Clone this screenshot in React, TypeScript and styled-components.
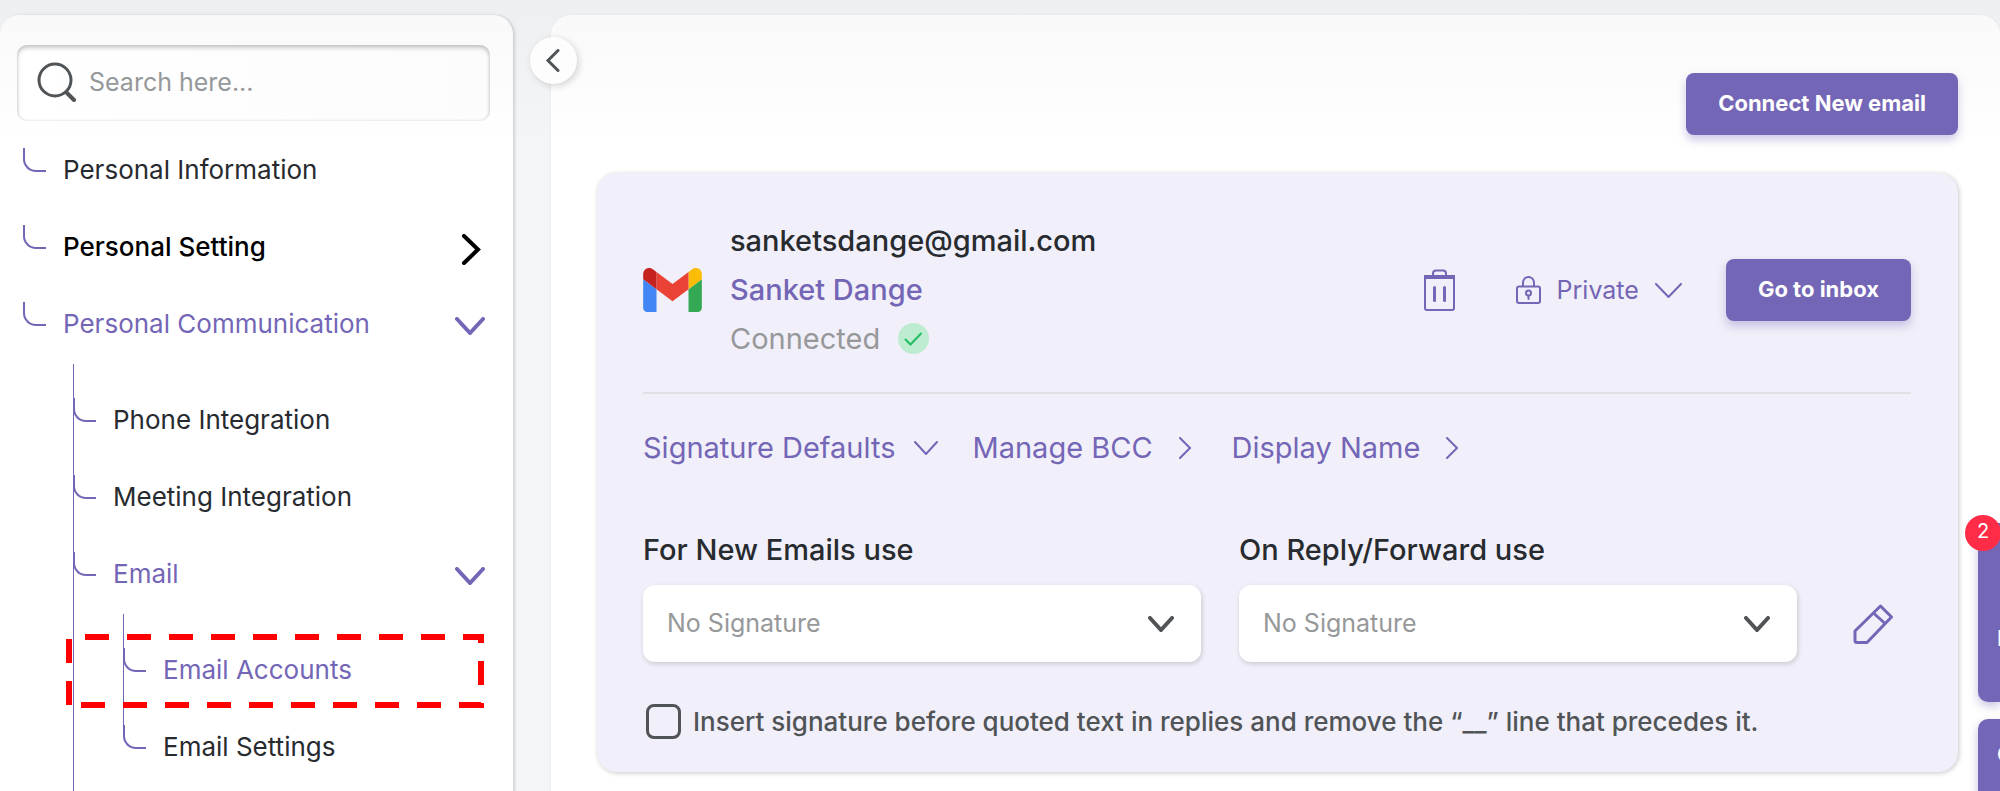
import React from "react";
import styled, { createGlobalStyle, css } from "styled-components";

const purple = "#7466b6";
const ink = "#272b2f";
const grey = "#979899";
const slate = "#505457";

const GlobalStyle = createGlobalStyle`
  *, *::before, *::after { box-sizing: border-box; }
  body {
    margin: 0;
    font-family: Inter, "Liberation Sans", sans-serif;
    font-size: 26px;
    color: ${ink};
    background: #f4f5f7;
  }
  button, input, select { font: inherit; color: inherit; margin: 0; }
  button { cursor: pointer; }
  svg { display: block; flex: none; }
`;

const Page = styled.div`
  position: relative;
  display: grid;
  grid-template-columns: 513px minmax(0, 1fr);
  column-gap: 38px;
  height: 100vh;
  padding-top: 15px;
  overflow: hidden;
  background: linear-gradient(#eeeff1, #f4f5f7 140px);
`;

const panel = css`
  border-radius: 20px 20px 0 0;
  background: linear-gradient(#f9f9f9, #ffffff 130px);
`;

const Sidebar = styled.aside`
  ${panel}
  padding: 30px 23px 0 17px;
  box-shadow: 2px 0 3px rgba(0, 0, 0, 0.14);
`;

const SearchBox = styled.label`
  display: flex;
  align-items: center;
  gap: 12px;
  height: 76px;
  padding: 0 20px 2px;
  margin-bottom: 10px;
  border-radius: 10px;
  background: linear-gradient(90deg, #ffffff, #fcfcfc);
  box-shadow: inset 0 3px 4px rgba(80, 80, 70, 0.28), inset 0 0 3px rgba(80, 80, 70, 0.2);
`;

const SearchInput = styled.input`
  flex: 1;
  min-width: 0;
  border: 0;
  padding: 0;
  outline: 0;
  background: transparent;
  font-size: 25px;
  &::placeholder { color: ${grey}; opacity: 1; }
`;

const Tree = styled.ul`
  list-style: none;
  margin: 0;
  padding: 0 0 0 6px;
`;

const Branch = styled.ul`
  list-style: none;
  margin: 2px 0 0 50px;
  padding: 17px 0 0;
  background: linear-gradient(${purple}, ${purple}) no-repeat 0 0 / 1px calc(100% - 50px);
`;

const OuterBranch = styled(Branch)`
  padding-bottom: 60px;
`;

const Node = styled.li`
  position: relative;
`;

const NodeLink = styled.a<{ $tone?: "active" | "strong" }>`
  display: flex;
  align-items: center;
  height: 77px;
  padding-right: 2px;
  text-decoration: none;
  color: ${(p) => (p.$tone === "active" ? purple : p.$tone === "strong" ? "#000000" : ink)};
  font-weight: ${(p) => (p.$tone === "strong" ? 500 : 400)};
  > svg { margin-top: 5px; }
`;

const Elbow = styled.span`
  align-self: flex-start;
  flex: none;
  width: 23px;
  height: 24px;
  margin: 17px 17px 0 0;
  border: solid ${purple};
  border-width: 0 0 2px 2px;
  border-bottom-left-radius: 13px;
`;

const NodeText = styled.span`
  flex: 1;
  white-space: nowrap;
`;

const Highlight = styled.svg`
  position: absolute;
  left: -58px;
  top: 3px;
  pointer-events: none;
`;

const Main = styled.main`
  ${panel}
  position: relative;
  padding: 58px 42px 0 46px;
  box-shadow: 0 0 3px rgba(0, 0, 0, 0.06);
`;

const Collapse = styled.button`
  position: absolute;
  left: -21px;
  top: 22px;
  display: grid;
  place-items: center;
  width: 47px;
  height: 47px;
  padding: 0 2px 0 0;
  border: 0;
  border-radius: 50%;
  background: #fdfdfd;
  color: ${slate};
  box-shadow: 2px 2px 7px rgba(0, 0, 0, 0.16);
`;

const Toolbar = styled.div`
  display: flex;
  justify-content: flex-end;
  margin-bottom: 38px;
`;

const PrimaryButton = styled.button`
  height: 62px;
  padding: 0 32px 2px;
  border: 0;
  border-radius: 8px;
  background: ${purple};
  color: #ffffff;
  font-size: 22px;
  font-weight: 700;
  white-space: nowrap;
  box-shadow: 0 5px 10px rgba(116, 102, 182, 0.35);
`;

const Card = styled.section`
  padding: 43px 47px 33px 46px;
  border-radius: 20px;
  background: #f1eff9;
  box-shadow: 1px 1px 5px rgba(0, 0, 0, 0.22);
`;

const Account = styled.header`
  display: flex;
  align-items: center;
  padding-bottom: 28px;
  border-bottom: 2px solid #e1e0e5;
`;

const Identity = styled.div`
  flex: 1;
  margin-left: 28px;
  padding-bottom: 1px;
  font-size: 29px;
  line-height: 49px;
`;

const Address = styled.div`
  font-weight: 500;
`;

const Owner = styled(Address)`
  color: ${purple};
`;

const Status = styled.div`
  display: flex;
  align-items: center;
  gap: 18px;
  color: ${grey};
`;

const PlainButton = styled.button`
  display: flex;
  align-items: center;
  padding: 0;
  border: 0;
  background: none;
  color: ${purple};
`;

const Visibility = styled(PlainButton)`
  gap: 16px;
  margin: 0 44px 0 61px;
  font-size: 25px;
`;

const Links = styled.nav`
  display: flex;
  gap: 34px;
  margin: 36px 0 66px;
`;

const LinkButton = styled(PlainButton)`
  gap: 19px;
  font-size: 29px;
  line-height: 36px;
`;

const Signatures = styled.div`
  display: grid;
  grid-template-columns: 1fr 1fr 76px;
  column-gap: 38px;
  align-items: end;
`;

const Field = styled.div`
  display: grid;
  gap: 17px;
  font-size: 29px;
  font-weight: 500;
  line-height: 36px;
`;

const SelectBox = styled.div`
  display: grid;
  align-items: center;
  > * { grid-area: 1 / 1; }
  > svg {
    justify-self: end;
    margin-right: 27px;
    color: ${slate};
    pointer-events: none;
  }
`;

const Select = styled.select`
  appearance: none;
  width: 100%;
  height: 77px;
  padding: 0 60px 2px 24px;
  border: 0;
  border-radius: 12px;
  background: #ffffff;
  color: ${grey};
  font-size: 25px;
  font-weight: 400;
  box-shadow: 1px 2px 5px rgba(0, 0, 0, 0.16);
`;

const EditButton = styled(PlainButton)`
  justify-content: center;
  height: 77px;
`;

const Option = styled.label`
  display: flex;
  align-items: center;
  gap: 12px;
  margin: 42px 0 0 3px;
  color: ${slate};
  font-weight: 500;
`;

const Checkbox = styled.input`
  appearance: none;
  flex: none;
  width: 35px;
  height: 35px;
  border: 3px solid ${slate};
  border-radius: 8px;
  &:checked { background: ${purple}; }
`;

const Rail = styled.div`
  position: absolute;
  right: 0;
  top: 523px;
  display: grid;
  gap: 17px;
`;

const RailTab = styled.button<{ $inset: number }>`
  width: 22px;
  height: 179px;
  padding: ${(p) => p.$inset}px 0 0 19px;
  border: 0;
  border-radius: 10px 0 0 10px;
  background: ${purple};
  color: #ffffff;
  font-size: 22px;
  line-height: 30px;
  font-weight: 600;
  text-align: left;
  display: flex;
  align-items: flex-start;
  overflow: hidden;
  box-shadow: 0 4px 10px rgba(116, 102, 182, 0.4);
`;

const Badge = styled.span`
  position: absolute;
  right: -1px;
  top: -8px;
  display: grid;
  place-items: center;
  width: 36px;
  height: 36px;
  padding-bottom: 5px;
  border-radius: 50%;
  background: #ff2c47;
  color: #ffffff;
  font-size: 20px;
`;

type Point = "left" | "right" | "down";

function Chevron({ point, w, h, box, stroke = 4 }: { point: Point; w: number; h: number; box?: number; stroke?: number }) {
  const vw = box ?? w + stroke;
  const vh = h + stroke;
  const cx = vw / 2;
  const cy = vh / 2;
  const l = cx - w / 2;
  const r = cx + w / 2;
  const t = cy - h / 2;
  const b = cy + h / 2;
  const d =
    point === "down"
      ? `M${l} ${t}L${cx} ${b}L${r} ${t}`
      : point === "right"
        ? `M${l} ${t}L${r} ${cy}L${l} ${b}`
        : `M${r} ${t}L${l} ${cy}L${r} ${b}`;
  return (
    <svg width={vw} height={vh} viewBox={`0 0 ${vw} ${vh}`} fill="none" stroke="currentColor" strokeWidth={stroke} strokeLinecap="round" aria-hidden="true">
      <path d={d} />
    </svg>
  );
}

const SearchIcon = () => (
  <svg width="40" height="40" viewBox="0 0 40 40" fill="none" stroke={slate} strokeWidth="3" strokeLinecap="round" aria-hidden="true">
    <circle cx="18" cy="18" r="16" />
    <path d="M29.500 30.500L37 38" strokeWidth="4" />
  </svg>
);

const GmailLogo = () => (
  <svg width="59" height="44" viewBox="52 42 88 66" role="img" aria-label="Gmail">
    <path fill="#4285f4" d="M58 108h14V74L52 59v43c0 3.320 2.690 6 6 6" />
    <path fill="#34a853" d="M120 108h14c3.320 0 6-2.690 6-6V59l-20 15" />
    <path fill="#fbbc04" d="M120 48v26l20-15v-8c0-7.420-8.470-11.650-14.400-7.200" />
    <path fill="#ea4335" d="M72 74V48l24 18 24-18v26L96 92" />
    <path fill="#c5221f" d="M52 51v8l20 15V48l-5.600-4.200c-5.940-4.450-14.400-.22-14.400 7.200" />
  </svg>
);

const TrashIcon = () => (
  <svg width="31" height="42" viewBox="0 0 31 42" fill="none" stroke="currentColor" strokeWidth="2" strokeLinecap="round" aria-hidden="true">
    <path d="M9 6V4.500a3 3 0 0 1 3-3h7a3 3 0 0 1 3 3V6" />
    <path d="M1 7v32a2 2 0 0 0 2 2h25a2 2 0 0 0 2-2V7z" />
    <path d="M2 8h27" strokeWidth="4" />
    <path d="M10.500 18.500v13M20.500 18.500v13" strokeWidth="3" />
  </svg>
);

const LockIcon = () => (
  <svg width="25" height="28" viewBox="0 0 25 28" fill="none" stroke="currentColor" strokeWidth="2" strokeLinecap="round" aria-hidden="true">
    <rect x="1" y="10.500" width="23" height="16.500" rx="2" />
    <path d="M7 10V6.500a5.500 5.500 0 0 1 11 0V10" />
    <circle cx="12.500" cy="17" r="2.500" />
    <path d="M12.500 20v3" />
  </svg>
);

const CheckIcon = () => (
  <svg width="31" height="31" viewBox="0 0 31 31" aria-hidden="true">
    <circle cx="15.500" cy="15.500" r="15.500" fill="#bdecd0" />
    <path d="M7.500 16.500l5 5L23 10.500" fill="none" stroke="#24bd65" strokeWidth="2" strokeLinecap="round" />
  </svg>
);

const PencilIcon = () => (
  <svg width="40" height="40" viewBox="0 0 40 40" fill="none" stroke="currentColor" strokeWidth="3" strokeLinejoin="round" aria-hidden="true">
    <path d="M2 27L27.500 2L38.500 13L14 38.500H4a2 2 0 0 1-2-2z" />
    <path d="M20.500 9L32 19.500" />
  </svg>
);

function SignatureField({ id, label }: { id: string; label: string }) {
  return (
    <Field>
      <label htmlFor={id}>{label}</label>
      <SelectBox>
        <Select id={id} defaultValue="none">
          <option value="none">No Signature</option>
        </Select>
        <Chevron point="down" w={22} h={12} />
      </SelectBox>
    </Field>
  );
}

export default function App() {
  return (
    <Page>
      <GlobalStyle />
      <Sidebar>
        <SearchBox>
          <SearchIcon />
          <SearchInput type="text" placeholder="Search here..." aria-label="Search settings" />
        </SearchBox>
        <nav aria-label="Settings">
          <Tree>
            <Node>
              <NodeLink href="#information"><Elbow /><NodeText>Personal Information</NodeText></NodeLink>
            </Node>
            <Node>
              <NodeLink href="#setting" $tone="strong">
                <Elbow /><NodeText>Personal Setting</NodeText>
                <Chevron point="right" w={14} h={27} box={34} />
              </NodeLink>
            </Node>
            <Node>
              <NodeLink href="#communication" $tone="active">
                <Elbow /><NodeText>Personal Communication</NodeText>
                <Chevron point="down" w={26} h={14} box={36} />
              </NodeLink>
              <OuterBranch>
                <Node>
                  <NodeLink href="#phone"><Elbow /><NodeText>Phone Integration</NodeText></NodeLink>
                </Node>
                <Node>
                  <NodeLink href="#meeting"><Elbow /><NodeText>Meeting Integration</NodeText></NodeLink>
                </Node>
                <Node>
                  <NodeLink href="#email" $tone="active">
                    <Elbow /><NodeText>Email</NodeText>
                    <Chevron point="down" w={26} h={14} box={36} />
                  </NodeLink>
                  <Branch>
                    <Node>
                      <NodeLink href="#accounts" $tone="active" aria-current="page">
                        <Elbow /><NodeText>Email Accounts</NodeText>
                      </NodeLink>
                      <Highlight width="420" height="75" viewBox="0 0 420 75" fill="none" stroke="#ff0000" strokeWidth="6" strokeDasharray="24 18" aria-hidden="true">
                        <path d="M4 71V3H416V71H4" />
                      </Highlight>
                    </Node>
                    <Node>
                      <NodeLink href="#email-settings"><Elbow /><NodeText>Email Settings</NodeText></NodeLink>
                    </Node>
                  </Branch>
                </Node>
              </OuterBranch>
            </Node>
          </Tree>
        </nav>
      </Sidebar>

      <Main>
        <Collapse type="button" aria-label="Collapse sidebar">
          <Chevron point="left" w={10} h={20} stroke={3} box={18} />
        </Collapse>
        <Toolbar>
          <PrimaryButton type="button">Connect New email</PrimaryButton>
        </Toolbar>
        <Card>
          <Account>
            <GmailLogo />
            <Identity>
              <Address>sanketsdange@gmail.com</Address>
              <Owner>Sanket Dange</Owner>
              <Status>Connected <CheckIcon /></Status>
            </Identity>
            <PlainButton type="button" aria-label="Delete account"><TrashIcon /></PlainButton>
            <Visibility type="button" aria-haspopup="listbox">
              <LockIcon />
              <span>Private</span>
              <Chevron point="down" w={25} h={13} stroke={2} />
            </Visibility>
            <PrimaryButton type="button">Go to inbox</PrimaryButton>
          </Account>
          <Links aria-label="Account options">
            <LinkButton type="button">Signature Defaults <Chevron point="down" w={22} h={12} stroke={2} /></LinkButton>
            <LinkButton type="button">Manage BCC <Chevron point="right" w={10} h={20} stroke={2} box={26} /></LinkButton>
            <LinkButton type="button">Display Name <Chevron point="right" w={10} h={20} stroke={2} box={26} /></LinkButton>
          </Links>
          <Signatures>
            <SignatureField id="new-signature" label="For New Emails use" />
            <SignatureField id="reply-signature" label="On Reply/Forward use" />
            <EditButton type="button" aria-label="Edit signatures"><PencilIcon /></EditButton>
          </Signatures>
          <Option>
            <Checkbox type="checkbox" />
            <span>Insert signature before quoted text in replies and remove the “__” line that precedes it.</span>
          </Option>
        </Card>
      </Main>

      <Rail>
        <RailTab type="button" $inset={100}>I</RailTab>
        <RailTab type="button" $inset={20}>C</RailTab>
        <Badge>2</Badge>
      </Rail>
    </Page>
  );
}
